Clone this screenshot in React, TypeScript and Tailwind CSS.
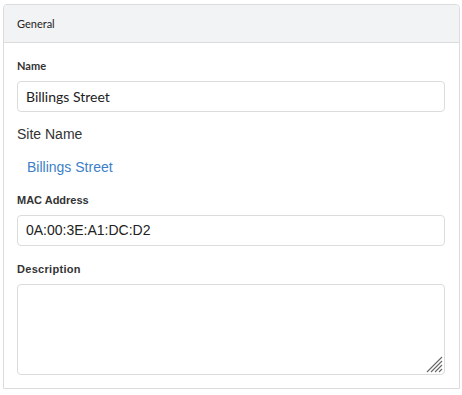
import React from "react";

export default function App() {
  return (
    <div className="w-[462px] h-[395px] bg-white pt-[4px] pl-[3px]">
      <div className="w-[457px] h-[385px] border border-[#dcdcdc] rounded-t-[4px] bg-white">
        <div className="h-[38px] bg-[#f2f3f5] border-b border-[#dcdcdc] rounded-t-[4px] flex items-center pl-[13px] pt-[2px] text-[11px] text-[#222] font-['Lato',sans-serif]">
          General
        </div>
        <div className="px-[13px] pt-[13px]">
          <div className="h-[20px] flex items-center text-[11px] font-bold text-[#333] font-['Lato',sans-serif]">Name</div>
          <div className="mt-[5px] h-[31px] w-[428px] border border-[#dcdcdc] rounded-[4px] flex items-center pl-[8px] text-[14px] text-[#222] font-['Lato',sans-serif]">
            Billings Street
          </div>
          <div className="mt-[12px] h-[20px] flex items-center text-[14px] text-[#333] font-['Liberation_Sans',Arial,sans-serif]">Site Name</div>
          <div className="mt-[13px] h-[20px] flex items-center pl-[10px] text-[14px] text-[#3c7fc8] font-['Liberation_Sans',Arial,sans-serif]">Billings Street</div>
          <div className="mt-[13px] h-[20px] flex items-center text-[11px] font-bold text-[#333] font-['Liberation_Sans',Arial,sans-serif]">MAC Address</div>
          <div className="mt-[5px] h-[31px] w-[428px] border border-[#dcdcdc] rounded-[4px] flex items-center pl-[8px] text-[14px] text-[#222] font-['Liberation_Sans',Arial,sans-serif]">
            0A:00:3E:A1:DC:D2
          </div>
          <div className="mt-[13px] h-[20px] flex items-center text-[11px] font-bold tracking-[0.3px] text-[#333] font-['Liberation_Sans',Arial,sans-serif]">Description</div>
          <div className="relative mt-[5px] w-[428px] h-[91px]">
            <textarea className="block h-[91px] w-[428px] border border-[#dcdcdc] rounded-[4px] resize-none outline-none" />
            <svg className="absolute right-[2px] bottom-[2px]" width="17" height="17" viewBox="0 0 17 17">
              <g stroke="#666" strokeWidth="1.1">
                <line x1="1" y1="16" x2="16" y2="1" />
                <line x1="5" y1="16" x2="16" y2="5" />
                <line x1="9" y1="16" x2="16" y2="9" />
                <line x1="13" y1="16" x2="16" y2="13" />
              </g>
            </svg>
          </div>
        </div>
      </div>
    </div>
  );
}
